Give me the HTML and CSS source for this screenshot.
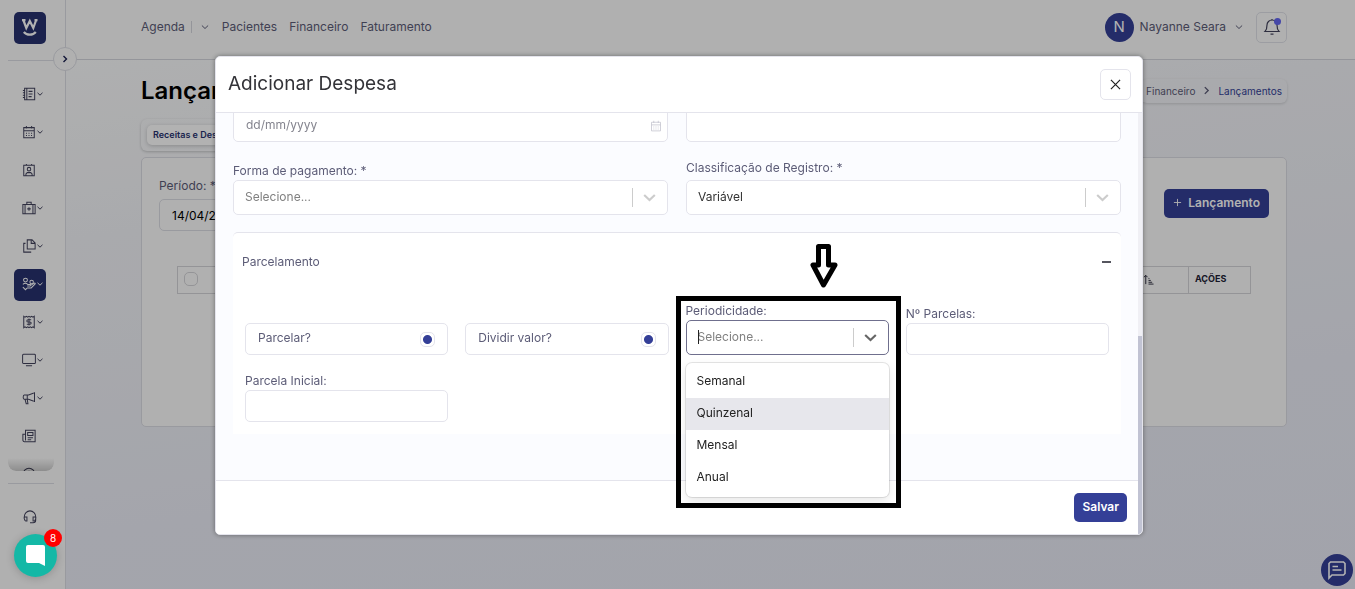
FILE: index.html
```html
<!DOCTYPE html>
<html lang="pt-BR">
<head>
<meta charset="utf-8">
<meta name="viewport" content="width=device-width, initial-scale=1">
<title>Lançamentos</title>
<link rel="stylesheet" href="styles.css">
</head>
<body>
<svg class="defs" aria-hidden="true">
  <symbol id="chev" viewBox="0 0 8 8"><path d="M1.500 2.800 4 5.200l2.500-2.400"/></symbol>
  <symbol id="calendar" viewBox="0 0 16 16"><path d="M2 3h12v11.500H2zM2 6.500h12M5 1v3M11 1v3"/><path d="M4.500 9.300h1.200M7.400 9.300h1.200M10.300 9.300h1.200M4.500 12h1.200M7.400 12h1.200M10.300 12h1.200"/></symbol>
</svg>
<div class="app">
  <aside class="sidebar">
    <a class="logo" href="#" aria-label="Início"><svg viewBox="0 0 32 32"><path d="M9.500 8.500 12.300 16 15.800 9l3.500 7 2.700-7.500M8 8.200h3.500M20.500 8.200h3"/><path d="M9.800 20c3 3.600 9 3.600 12 0"/></svg></a>
    <button class="expand" aria-label="Expandir menu"><svg viewBox="0 0 8 8"><path d="M2.500 1 5.500 4l-3 3"/></svg></button>
    <nav class="side-list" aria-label="Menu lateral">
      <a class="item" href="#" aria-label="Cadastros"><svg class="ico" viewBox="0 0 16 16"><path d="M3 1.500h11.500v13H3zM5.500 1.500v13M1 4h2.500M1 6.700h2.500M1 9.300h2.500M1 12h2.500M7.500 5H12M7.500 8H12M7.500 11H11"/></svg><svg class="chev"><use href="#chev"/></svg></a>
      <a class="item" href="#" aria-label="Agenda"><svg class="ico"><use href="#calendar"/></svg><svg class="chev"><use href="#chev"/></svg></a>
      <a class="item" href="#" aria-label="Pacientes"><svg class="ico" viewBox="0 0 16 16"><path d="M2 2.500h12v12H2zM5 1v1.500M11 1v1.500M4.500 14.500v-2l1.500-1.500h4l1.500 1.500v2"/><circle cx="8" cy="7" r="2"/></svg><span class="chev"></span></a>
      <a class="item" href="#" aria-label="Clínica"><svg class="ico" viewBox="0 0 16 16"><path d="M1 4h14v10.500H1zM5.500 4V1.500h5V4M3.500 4v10M12.500 4v10M8 7v4M6 9h4"/></svg><svg class="chev"><use href="#chev"/></svg></a>
      <a class="item" href="#" aria-label="Documentos"><svg class="ico" viewBox="0 0 16 16"><path d="M6 1h5.500L15 4.500v7H6zM10.500 1v4H15M4 5H2v10h8.500"/></svg><svg class="chev"><use href="#chev"/></svg></a>
      <a class="item active" href="#" aria-label="Financeiro"><svg class="ico" viewBox="0 0 16 16"><circle cx="4" cy="3.500" r="2.200"/><circle cx="11" cy="5.800" r="2"/><path d="M1 8.500c2-1.800 4-1.400 5.500 0h3c1 .5.500 1.700-.5 1.700H6M9.500 9.800 14 7c1-.4 1.500.5.800 1.200L10.500 12.500H6L4 14.500 1 11.500"/></svg><svg class="chev"><use href="#chev"/></svg></a>
      <a class="item" href="#" aria-label="Faturamento"><svg class="ico" viewBox="0 0 16 16"><path d="M2 1.500 3.500 2.500l1.500-1 1.500 1L8 1.500l1.500 1 1.500-1 1.500 1 1.500-1v13l-1.500-1-1.500 1-1.500-1-1.500 1-1.500-1-1.500 1-1.500-1-1.500 1zM10.500 5.500H7c-2 0-2 2.500 0 2.500h2c2 0 2 2.500 0 2.500H5.500M8 4v8"/></svg><svg class="chev"><use href="#chev"/></svg></a>
      <a class="item" href="#" aria-label="Telas"><svg class="ico" viewBox="0 0 16 16"><rect x=".7" y="1.500" width="14.600" height="10.500" rx="1"/><path d="M4.500 14.500h7"/></svg><svg class="chev"><use href="#chev"/></svg></a>
      <a class="item" href="#" aria-label="Marketing"><svg class="ico" viewBox="0 0 16 16"><path d="M14.300 1.500v11M13.500 2.200 7.500 4.500H2.500C1 4.500 1 9.500 2.500 9.500h5l6 2.300M6 4.500v5M3.500 9.500l1.300 5h2L6 9.500"/></svg><svg class="chev"><use href="#chev"/></svg></a>
      <a class="item" href="#" aria-label="Notícias"><svg class="ico" viewBox="0 0 16 16"><path d="M4 1.500h11v13H2.500C1 14.500 1 13 1 12V6h3zM4 6v7M6.500 4h6v3.500h-6zM6.500 10h6M6.500 12.300h4"/></svg><span class="chev"></span></a>
      <a class="item" href="#" aria-label="Conta"><svg class="ico" viewBox="0 0 16 16"><circle cx="8" cy="8" r="6.500"/><circle cx="8" cy="8" r="3"/></svg><span class="chev"></span></a>
    </nav>
    <a class="item support" href="#" aria-label="Suporte"><svg class="ico" viewBox="0 0 16 16"><path d="M1.500 9V7.500a6.500 6.500 0 0 1 13 0V12c0 1.500-1.500 2.500-3 2.500H8M1.500 8h3v4.500H3c-1.500 0-2-4.500-1.500-4.500zM14.500 8h-3v4.500H13c1.500 0 2-4.500 1.500-4.500z"/></svg><span class="chev"></span></a>
  </aside>

  <div class="page">
    <header class="topbar">
      <nav class="topnav" aria-label="Principal">
        <a href="#">Agenda</a><span class="bar"></span><button class="mini" aria-label="Mais opções de agenda"><svg><use href="#chev"/></svg></button>
        <a href="#">Pacientes</a><a href="#">Financeiro</a><a href="#">Faturamento</a>
      </nav>
      <div class="account">
        <span class="avatar">N</span>
        <button class="user">Nayanne Seara<svg><use href="#chev"/></svg></button>
        <button class="bell" aria-label="Notificações"><svg viewBox="0 0 18 18"><path d="M2 13.500h14c-1.500-1.500-2-3-2-6.500a5 5 0 0 0-10 0c0 3.500-.5 5-2 6.500zM9 1v1M7.500 16.200h3"/></svg></button>
      </div>
    </header>
    <main class="content">
      <div class="title-row">
        <h1>Lançamentos</h1>
        <nav class="crumbs" aria-label="Trilha"><a href="#">Financeiro</a><svg viewBox="0 0 8 8"><path d="M2.500 1 5.500 4l-3 3"/></svg><a class="here" href="#">Lançamentos</a></nav>
      </div>
      <div class="tabs"><button>Receitas e Despesas</button></div>
      <section class="panel">
        <div class="filters">
          <div class="period"><label for="periodo">Período: *</label><input id="periodo" type="text" value="14/04/2025"></div>
          <button class="primary new"><svg viewBox="0 0 10 10"><path d="M5 1v8M1 5h8"/></svg>Lançamento</button>
        </div>
        <table>
          <thead><tr>
            <th class="check"><input type="checkbox" aria-label="Selecionar todos"></th>
            <th class="sort"><svg viewBox="0 0 12 12"><path d="M3 11V1.500M1 3.500l2-2 2 2M6 5h1M6 7h2.500M6 9h4M6 11h5.500"/></svg></th>
            <th class="actions">AÇÕES</th>
          </tr></thead>
        </table>
      </section>
    </main>
  </div>
</div>
<button class="feedback" aria-label="Mensagens"><svg viewBox="0 0 20 20"><path d="M2 18V3.500L3.500 2h13L18 3.500v10L16.500 15H5zM5.500 6.500H11M5.500 10h9"/></svg></button>

<div class="backdrop">
  <form class="modal" role="dialog" aria-labelledby="modal-title">
    <header class="modal-head">
      <h2 id="modal-title">Adicionar Despesa</h2>
      <button type="button" class="close" aria-label="Fechar"><svg viewBox="0 0 12 12"><path d="m1 1 10 10M11 1 1 11"/></svg></button>
    </header>
    <div class="modal-scroll">
      <div class="modal-body">
        <div class="pair">
          <div class="date"><input type="text" placeholder="dd/mm/yyyy" aria-label="Data"><svg><use href="#calendar"/></svg></div>
          <input type="text" aria-label="Valor">
        </div>
        <div class="pair">
          <div class="field"><label for="forma">Forma de pagamento: *</label>
            <div class="select"><select id="forma" class="muted"><option>Selecione...</option></select><svg><use href="#chev"/></svg></div></div>
          <div class="field roomy"><label for="classe">Classificação de Registro: *</label>
            <div class="select"><select id="classe"><option>Variável</option></select><svg><use href="#chev"/></svg></div></div>
        </div>
        <section class="card">
          <div class="card-head"><h3>Parcelamento</h3><button type="button" class="collapse" aria-label="Recolher"></button></div>
          <div class="quad">
            <label class="toggle">Parcelar?<input type="checkbox" checked></label>
            <label class="toggle">Dividir valor?<input type="checkbox" checked></label>
            <div class="field period-field"><label for="periodicidade">Periodicidade:</label>
              <div class="select open"><span class="caret"></span><select id="periodicidade" class="muted"><option>Selecione...</option></select><svg><use href="#chev"/></svg></div>
              <ul class="menu" role="listbox" aria-label="Periodicidade">
                <li role="option">Semanal</li><li role="option" class="hover">Quinzenal</li><li role="option">Mensal</li><li role="option">Anual</li>
              </ul>
              <div class="mark"></div>
              <svg class="arrow" viewBox="0 0 28 44"><path d="M8.500 2.500h10V21H25L13.500 41 3 21h5.500z"/></svg>
            </div>
            <div class="field"><label for="parcelas">Nº Parcelas:</label><input id="parcelas" type="text"></div>
            <div class="field"><label for="inicial">Parcela Inicial:</label><input id="inicial" type="text"></div>
          </div>
        </section>
      </div>
      <footer class="modal-foot"><button type="submit" class="primary">Salvar</button></footer>
      <div class="track"><div class="thumb"></div></div>
    </div>
  </form>
</div>
<button class="chat" aria-label="Abrir chat"><svg viewBox="0 0 20 22"><path d="M2 0h15a2 2 0 0 1 2 2v19l-6-3H2a2 2 0 0 1-2-2V2a2 2 0 0 1 2-2z"/></svg><span class="badge">8</span></button>
</body>
</html>
```
FILE: styles.css
```css
* { box-sizing: border-box; }
body { margin: 0; font: 12px/16px Inter, "Liberation Sans", sans-serif; color: #5c5c77; overflow: hidden; }
button, input, select { font: inherit; color: inherit; margin: 0; }
button { padding: 0; border: 0; background: none; }
a { color: inherit; text-decoration: none; }
h1, h2, h3 { margin: 0; }
svg { fill: none; stroke: currentColor; stroke-width: 1; flex: none; }
.defs { position: absolute; width: 0; height: 0; }

.app { display: flex; min-height: 100vh; background: linear-gradient(172deg, #fcfdfd 5%, #f3f4f8 32%, #ebedf6 70%, #e9eaf5 100%); }

.sidebar { position: relative; width: 66px; height: 100vh; flex: none; display: flex; flex-direction: column; align-items: center; padding: 12px 12px 0 8px; background: #fdfdfd; border-right: 1px solid #dcdde4; color: #42425c; }
.logo { width: 32px; height: 32px; margin-left: -1px; border-radius: 5px; background: #27326f; color: #fff; }
.logo svg { display: block; stroke-width: 2.200; }
.expand { position: absolute; top: 47px; right: -12px; width: 24px; height: 24px; border: 1px solid #dcdde4; border-radius: 50%; background: #fdfdfd; display: grid; place-items: center; color: #1b2050; }
.expand svg { width: 8px; height: 8px; stroke-width: 1.400; }
.side-list { width: 46px; margin-top: 16px; padding-top: 18px; border-top: 1px solid #dcdde4; height: 411px; overflow: hidden; display: flex; flex-direction: column; align-items: center; gap: 6px; position: relative; flex: none; border-bottom-left-radius: 8px; border-bottom-right-radius: 8px; }
.side-list::after { content: ""; position: absolute; left: 0; right: 0; bottom: 0; height: 13px; border-radius: 0 0 8px 8px; background: linear-gradient(#0000, #0003); }
.item { width: 32px; height: 32px; margin-left: -2px; padding: 0 2px 2px 0; flex: none; border-radius: 5px; display: flex; align-items: center; justify-content: flex-end; }
.item .ico { width: 14px; height: 14px; stroke-width: 1.150; }
.item .chev { width: 8px; height: 8px; stroke-width: 1; }
.item.active { background: #27326f; color: #fff; }
.support { width: 46px; margin: 12px 0 0; height: 68px; padding-right: 9px; border-top: 1px solid #dcdde4; border-radius: 0; }

.page { flex: 1; min-width: 0; }
.topbar { height: 60px; padding: 0 68px 5px 75px; border-bottom: 1px solid #d4d6dd; display: flex; align-items: center; justify-content: space-between; background: #fcfdfd; }
.topnav, .account { display: flex; align-items: center; gap: 12px; }
.topnav .bar { width: 1px; height: 12px; margin: 0 -4px 0 -6px; background: #d4d6dd; }
.mini { display: flex; }
.mini svg, .user svg { width: 10px; height: 10px; stroke-width: .8; }
.account { gap: 6px; }
.avatar { width: 29px; height: 29px; border-radius: 50%; background: #343f97; color: #fff; display: grid; place-items: center; font-size: 15px; }
.user { display: flex; align-items: center; gap: 8px; margin-right: 6px; }
.bell { position: relative; width: 31px; height: 31px; border: 1px solid #e0e1e8; border-radius: 5px; display: grid; place-items: center; color: #42425c; }
.bell svg { width: 18px; height: 18px; stroke-width: 1.200; }
.bell::after { content: ""; position: absolute; top: 5px; right: 5px; width: 7px; height: 7px; border-radius: 50%; background: #6366f1; }

.content { padding: 18px 68px 0 75px; }
.title-row { display: flex; justify-content: space-between; align-items: center; }
h1 { font-size: 24px; line-height: 25px; font-weight: 600; color: #000; }
.crumbs { display: flex; align-items: center; gap: 7px; padding: 4px 5px; border-radius: 6px; box-shadow: 0 1px 3px #00000026; font-size: 10px; }
.crumbs svg { width: 9px; height: 9px; stroke-width: 1.200; }
.here { color: #343f97; }
.tabs { margin: 16px 0 6px; padding: 6px; border-radius: 6px; box-shadow: 0 1px 3px #00000033; display: flex; height: 32px; width: fit-content; }
.tabs button { padding: 0 6px; border-radius: 5px; background: #fff; box-shadow: 0 1px 4px #00000033; color: #27326f; font-size: 9px; font-weight: 600; white-space: nowrap; }
.panel { min-height: 270px; border: 1px solid #dcdde4; border-radius: 5px; background: #fdfdfd; padding: 20px 17px 0; }
.filters { display: flex; justify-content: space-between; align-items: flex-start; }
.period { display: flex; flex-direction: column; gap: 5px; }
.period input { width: 200px; height: 32px; padding: 0 12px; border: 1px solid #dcdde4; border-radius: 5px; background: none; color: #000; }
.primary { height: 29px; border-radius: 5px; background: #343f97; color: #fff; font-weight: 600; padding: 0 8px 2px; }
.new { margin-top: 11px; display: flex; align-items: center; gap: 6px; padding: 0 9px 2px; }
.new svg { width: 9px; height: 9px; }
table { width: calc(100% - 36px); margin: 35px 18px 0; border-collapse: collapse; }
th { height: 27px; padding: 0 6px 2px; border: 1px solid #d4d4d8; text-align: left; color: #222236; font-size: 9px; line-height: 12px; }
.check { width: 300px; }
.check input { appearance: none; display: block; width: 14px; height: 14px; border: 1px solid #d4d4d8; border-radius: 5px; }
.sort { text-align: right; padding-right: 34px; }
.sort svg { width: 11px; height: 11px; vertical-align: middle; }
.actions { width: 62px; }

.feedback { position: fixed; right: 2px; bottom: 3px; width: 32px; height: 32px; border-radius: 50%; background: #343f97; color: #fff; display: grid; place-items: center; }
.feedback svg { width: 20px; height: 20px; stroke-width: 1.600; }

.backdrop { position: fixed; inset: 0; background: rgba(0, 0, 0, .3); padding: 56px 212px 54px 215px; }
.modal { height: 100%; display: flex; flex-direction: column; background: #fff; border: 1px solid #e4e4ec; border-radius: 5px; box-shadow: 0 0 5px #0006; overflow: hidden; }
.modal-head { flex: none; height: 56px; padding: 0 11px 0 12px; border-bottom: 1px solid #e4e4ec; display: flex; align-items: center; justify-content: space-between; }
h2 { padding-bottom: 2px; font-size: 19px; line-height: 26px; font-weight: 400; color: #333338; }
.close { width: 31px; height: 31px; border: 1px solid #e4e4ec; border-radius: 5px; display: grid; place-items: center; color: #222; }
.close svg { width: 11px; height: 11px; stroke-width: 1.300; }
.modal-scroll { position: relative; flex: 1; min-height: 0; overflow: hidden; display: flex; flex-direction: column; justify-content: flex-end; background: #fbfcff; }
.modal-body { padding: 0 21px 46px 17px; }
.modal-body input[type=text], .modal-body select { width: 100%; height: 32px; border: 1px solid #e4e4ec; border-radius: 5px; background: #fff; padding: 0 12px; outline: none; }
.pair { display: grid; grid-template-columns: 1fr 1fr; gap: 18px; align-items: end; }
.pair + .pair { margin: 18px 0 17px; }
.modal-body .pair input[type=text], .modal-body .pair select { height: 35px; }
.date { position: relative; }
.date svg { position: absolute; right: 6px; top: 13px; width: 12px; height: 12px; color: #c0c0cc; }
::placeholder { color: #85858f; opacity: 1; }
.field { display: flex; flex-direction: column; gap: 1px; }
.roomy { gap: 4px; }
.select { position: relative; }
.modal-body select { display: block; appearance: none; padding: 0 40px 2px 11px; color: #333; }
.modal-body select.muted { color: #808080; }
.select::after { content: ""; position: absolute; right: 35px; top: 8px; bottom: 8px; width: 1px; background: #ccc; }
.select svg { position: absolute; right: 10px; top: 9px; width: 17px; height: 17px; color: #ccc; }
.card { background: #fff; border-top: 1px solid #e4e4ec; border-radius: 5px 5px 0 0; padding: 0 12px 12px; }
.card-head { display: flex; justify-content: space-between; align-items: center; height: 58px; margin: 0 -2px 0 -3px; }
h3 { font-size: 12px; line-height: 16px; font-weight: 400; }
.collapse { width: 9px; height: 2px; background: #55555e; }
.quad { display: grid; grid-template-columns: repeat(4, 1fr); column-gap: 17px; row-gap: 18px; align-items: end; padding-top: 12px; }
.toggle { height: 32px; border: 1px solid #e4e4ec; border-radius: 5px; display: flex; align-items: center; justify-content: space-between; padding: 0 12px; line-height: 28px; align-items: flex-start; }
.toggle input { appearance: none; width: 15px; height: 15px; margin-top: 8px; border: 1px solid #e4e4ec; border-radius: 5px; background: radial-gradient(circle, #343f97 4px, #fff 5px); }
.period-field { position: relative; }
.modal-body .open select { height: 35px; border-color: #6f6f8d; }
.open svg { color: #666; }
.caret { position: absolute; left: 12px; top: 10px; width: 1px; height: 14px; background: #222; }
.menu { position: absolute; z-index: 2; top: 60px; left: 0; right: 0; margin: 0; padding: 3px 0; list-style: none; background: #fff; border-radius: 6px; box-shadow: 0 0 0 1px #0000001a, 0 4px 11px #0000001a; color: #222; }
.menu li { height: 32px; padding: 7px 11px; }
.menu .hover { background: #e7e7ec; }
.mark { position: absolute; left: -10px; right: -12px; top: -7px; height: 212px; border: 5px solid #000; pointer-events: none; }
.arrow { position: absolute; left: 124px; top: -59px; width: 28px; height: 44px; color: #000; stroke-width: 5; fill: #fff; stroke-linejoin: round; }
.modal-foot { flex: none; height: 54px; border-top: 1px solid #e4e4ec; background: #fff; padding: 12px 15px; display: flex; justify-content: flex-end; }
.track { position: absolute; top: 0; bottom: 0; right: 0; width: 4px; background: #f0f0f5; }
.thumb { height: 47%; margin-top: 223px; background: #c1c3d3; }

.chat { position: fixed; left: 14px; bottom: 12px; width: 43px; height: 43px; border-radius: 50%; background: #14b8a6; color: #fff; display: grid; place-items: center; box-shadow: 0 1px 8px #0003; }
.chat svg { width: 20px; height: 22px; fill: currentColor; stroke: none; }
.badge { position: absolute; top: -5px; right: -5px; width: 18px; height: 18px; border-radius: 50%; background: #f00; font-size: 10px; line-height: 18px; }
```
